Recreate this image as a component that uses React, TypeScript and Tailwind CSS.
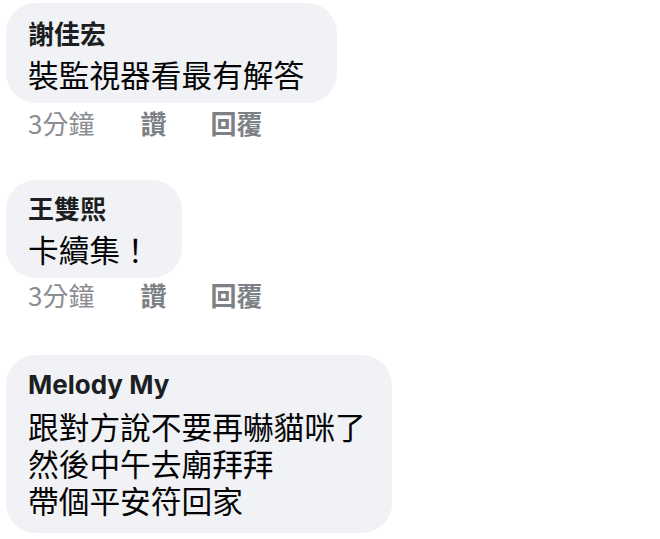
import React from "react";

const font = { fontFamily: '"Noto Sans CJK TC", sans-serif' };

function Comment({
  name,
  lines,
  meta,
  pt,
  pb,
  pr,
  metaMt,
  nameFont,
}: {
  name: string;
  lines: string[];
  meta: boolean;
  pt: string;
  pb: string;
  pr: string;
  metaMt?: string;
  nameFont?: string;
}) {
  return (
    <div className="flex flex-col items-start">
      <div className={`bg-[#f0f2f5] rounded-[30px] pl-[22px] ${pr} ${pt} ${pb}`}>
        <div className={`text-[26px] leading-[34px] font-bold text-[#1c1e21] mb-[5px] ${nameFont ?? ""}`}>
          {name}
        </div>
        <div className="text-[30.7px] leading-[37px] text-[#050505]">
          {lines.map((l, i) => (
            <React.Fragment key={i}>
              {i > 0 && <br />}
              {l}
            </React.Fragment>
          ))}
        </div>
      </div>
      {meta && (
        <div className={`flex items-center pl-[22px] text-[26px] leading-[34px] ${metaMt ?? ""}`}>
          <span className="text-[#8a8d91]">3分鐘</span>
          <span className="ml-[46px] font-bold text-[#7d8085]">讚</span>
          <span className="ml-[44px] font-bold text-[#7d8085]">回覆</span>
        </div>
      )}
    </div>
  );
}

export default function App() {
  return (
    <div className="w-[660px] h-[539px] bg-white overflow-hidden pl-[6px] pt-[3px] flex flex-col" style={font}>
      <Comment name="謝佳宏" lines={["裝監視器看最有解答"]} meta pt="pt-[13px]" pb="pb-[11px]" pr="pr-[33px]" metaMt="mt-[3px]" />
      <div className="h-[40px] shrink-0" />
      <Comment name="王雙熙" lines={["卡續集！"]} meta pt="pt-[11px]" pb="pb-[11px]" pr="pr-[31px]" metaMt="mt-0" />
      <div className="h-[43px] shrink-0" />
      <Comment
        name="Melody My"
        lines={["跟對方說不要再嚇貓咪了", "然後中午去廟拜拜", "帶個平安符回家"]}
        meta={false}
        pt="pt-[13px]"
        pb="pb-[15px]"
        pr="pr-[26px]"
        nameFont="font-['Inter','Noto_Sans_CJK_TC',sans-serif]"
      />
    </div>
  );
}
